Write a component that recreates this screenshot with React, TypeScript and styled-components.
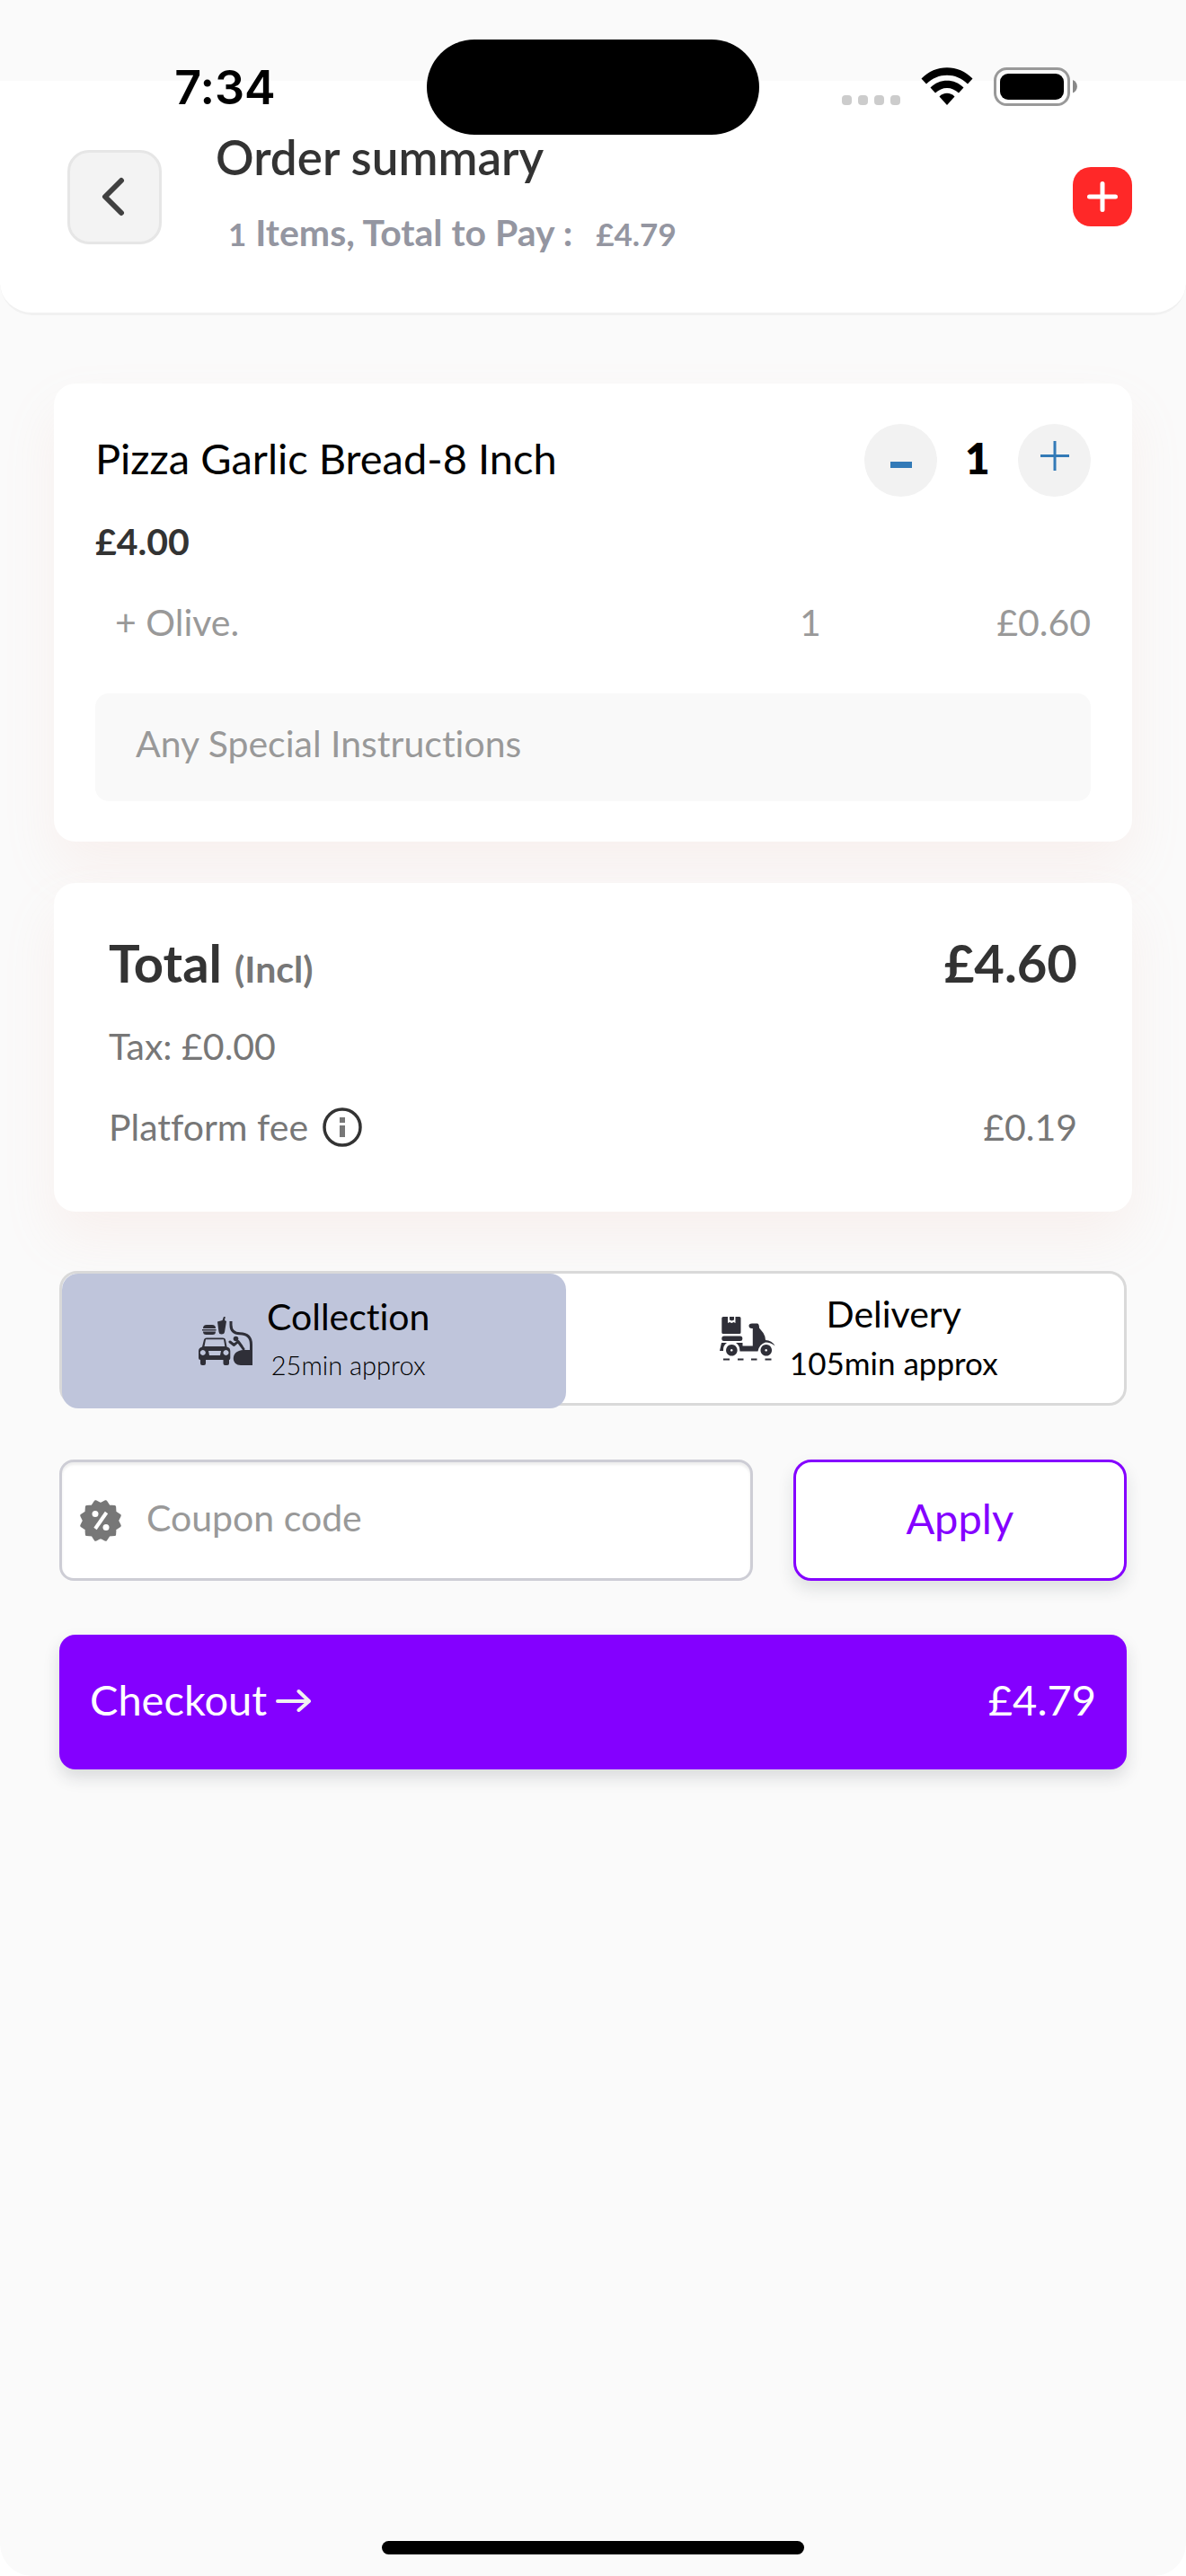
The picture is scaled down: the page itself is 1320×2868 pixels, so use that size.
import React, { useState } from "react";
import styled, { createGlobalStyle } from "styled-components";

const GlobalStyle = createGlobalStyle`
  *, *::before, *::after { box-sizing: border-box; }
  body {
    margin: 0;
    background: #ffffff;
    font-family: Lato, "Open Sans", sans-serif;
    font-variant-ligatures: none;
    color: #000000;
  }
  button, input, textarea {
    margin: 0;
    font-family: inherit;
    font-variant-ligatures: none;
  }
  button { cursor: pointer; }
`;

const Page = styled.div`
  position: relative;
  min-height: 100vh;
  padding-top: 90px;
  background: #fafafa;
  border-radius: 0 0 36px 36px;
`;

/* Device chrome that floats above the page */
const StatusBar = styled.div`
  position: absolute;
  inset: 0 0 auto 0;
  z-index: 2;
  height: 150px;
  padding-top: 44px;
  display: grid;
  grid-template-columns: 1fr 370px 1fr;
`;

const Clock = styled.time`
  padding: 22px 0 0 26px;
  text-align: center;
  font-family: Inter, sans-serif;
  font-size: 52px;
  line-height: 64px;
  font-weight: 600;
`;

const Island = styled.div`
  height: 106px;
  border-radius: 53px;
  background: #000000;
`;

const StatusIcons = styled.div`
  display: flex;
  justify-content: center;
  align-items: flex-start;
  gap: 23px;
  padding: 31px 28px 0 0;
`;

const HomeIndicator = styled.div`
  position: absolute;
  bottom: 24px;
  left: 50%;
  width: 470px;
  height: 15px;
  margin-left: -235px;
  border-radius: 8px;
  background: #000000;
`;

const Header = styled.header`
  display: flex;
  align-items: center;
  gap: 60px;
  padding: 59px 60px;
  background: #ffffff;
  border-bottom: 3px solid #f1f1f1;
  border-radius: 0 0 36px 36px;
`;

const BackButton = styled.button`
  display: grid;
  place-items: center;
  width: 105px;
  height: 105px;
  margin-left: 15px;
  padding: 0;
  border: 3px solid #e6e6e6;
  border-radius: 24px;
  background: #f3f3f3;
`;

const Heading = styled.div`
  flex: 1;
  display: flex;
  flex-direction: column;
  gap: 28px;
`;

const Title = styled.h1`
  margin: 0;
  font-size: 53px;
  line-height: 52px;
  font-weight: 600;
  color: #333333;
`;

const Subtitle = styled.p`
  margin: 0;
  padding-left: 14px;
  font-size: 41px;
  line-height: 60px;
  font-weight: 700;
  color: #9496a1;
`;

const Small = styled.span<{ $gap?: boolean }>`
  font-size: 35px;
  line-height: 40px;
  margin-left: ${(p) => (p.$gap ? "16px" : "0")};
`;

const AddButton = styled.button`
  display: grid;
  place-items: center;
  width: 66px;
  height: 66px;
  padding: 0;
  border: 0;
  border-radius: 20px;
  background: #ff2828;
`;

const Main = styled.main`
  display: flex;
  flex-direction: column;
  padding: 76px 60px 0;
`;

const Card = styled.section`
  border-radius: 24px;
  background: #ffffff;
  box-shadow: 0 30px 60px rgba(240, 160, 150, 0.11);
`;

const ItemCard = styled(Card)`
  padding: 45px 46px;
`;

const TotalCard = styled(Card)`
  margin-top: 46px;
  padding: 53px 61px 64px;
`;

const Row = styled.div<{ $top?: number }>`
  display: flex;
  justify-content: space-between;
  align-items: flex-start;
  margin-top: ${(p) => p.$top ?? 0}px;
`;

const ItemName = styled.h2`
  margin: 0;
  font-size: 47px;
  line-height: 76px;
  font-weight: 400;
`;

const Stepper = styled.div`
  display: grid;
  grid-template-columns: 81px 90px 81px;
  text-align: center;
`;

const StepButton = styled.button`
  display: grid;
  place-items: center;
  width: 81px;
  height: 81px;
  padding: 0;
  border: 0;
  border-radius: 50%;
  background: #f2f2f2;
`;

const Quantity = styled.output`
  font-size: 47px;
  line-height: 76px;
  font-weight: 800;
`;

const ItemPrice = styled.p`
  margin: 20px 0 0;
  font-size: 41px;
  line-height: 60px;
  font-weight: 700;
  color: #333333;
`;

const ExtraRow = styled.div`
  display: grid;
  grid-template-columns: 1fr 124px 200px;
  margin-top: 30px;
  padding-left: 22px;
  font-size: 41px;
  line-height: 60px;
  color: #999999;
`;

const AlignRight = styled.span`
  text-align: right;
`;

const Instructions = styled.textarea`
  display: block;
  width: 100%;
  height: 120px;
  margin-top: 49px;
  padding: 32px 45px;
  border: 0;
  border-radius: 15px;
  resize: none;
  overflow: hidden;
  background: #f9f9f9;
  font-size: 41px;
  line-height: 48px;
  &::placeholder { color: #999999; opacity: 1; }
`;

const Total = styled.strong`
  font-size: 58px;
  line-height: 72px;
  font-weight: 700;
  color: #333333;
`;

const Included = styled.span`
  font-size: 41px;
  line-height: 40px;
  font-weight: 700;
  color: #777777;
`;

const Fee = styled.span`
  display: flex;
  align-items: center;
  gap: 16px;
  font-size: 41px;
  line-height: 60px;
  color: #777777;
`;

const Options = styled.div`
  display: grid;
  grid-template-columns: 19fr 21fr;
  height: 150px;
  margin: 66px 6px 0;
  border: 3px solid #d9d9d9;
  border-radius: 20px;
  background: #ffffff;
`;

const Option = styled.button<{ $active?: boolean }>`
  display: flex;
  justify-content: center;
  align-items: center;
  gap: 16px;
  height: ${(p) => (p.$active ? "150px" : "144px")};
  padding: ${(p) => (p.$active ? "0" : "0 0 0 30px")};
  border: 0;
  border-radius: 18px;
  background: ${(p) => (p.$active ? "#bfc5db" : "transparent")};
  color: #000000;
`;

const OptionText = styled.span`
  display: flex;
  flex-direction: column;
  align-items: center;
  gap: 6px;
  font-size: 41px;
  line-height: 48px;
`;

const OptionTime = styled.span<{ $light?: boolean }>`
  font-size: ${(p) => (p.$light ? 29 : 35)}px;
  font-weight: ${(p) => (p.$light ? 300 : 400)};
`;

const CouponRow = styled.form`
  display: grid;
  grid-template-columns: 27fr 13fr;
  gap: 45px;
  margin: 60px 6px 0;
`;

const CouponField = styled.label`
  display: flex;
  align-items: center;
  gap: 27px;
  height: 135px;
  padding: 0 19px;
  border: 3px solid #cdcdd5;
  border-radius: 16px;
  background: #ffffff;
  box-shadow: inset 0 3px 3px rgba(0, 0, 0, 0.07);
`;

const CouponInput = styled.input`
  flex: 1;
  min-width: 0;
  padding: 0 0 6px;
  border: 0;
  outline: 0;
  background: transparent;
  font-size: 41px;
  line-height: 60px;
  &::placeholder { color: #999999; opacity: 1; }
`;

const ApplyButton = styled.button`
  padding: 0 0 6px;
  border: 3px solid #8400ff;
  border-radius: 20px;
  background: #ffffff;
  box-shadow: 0 9px 18px rgba(33, 43, 54, 0.13);
  font-size: 47px;
  color: #8400ff;
`;

const CheckoutButton = styled.button`
  display: flex;
  justify-content: space-between;
  align-items: center;
  height: 150px;
  margin: 60px 6px 0;
  padding: 0 34px 6px;
  border: 0;
  border-radius: 18px;
  background: #8400ff;
  box-shadow: 0 9px 18px rgba(33, 43, 54, 0.15);
  font-size: 47px;
  color: #ffffff;
`;

const CheckoutLabel = styled.span`
  display: flex;
  align-items: center;
  gap: 10px;
`;

const SignalDots = () => (
  <svg width="65" height="42" viewBox="0 0 65 42" fill="#cccccc" aria-hidden="true">
    {[0, 18, 36, 54].map((x) => (
      <rect key={x} x={x} y="31" width="11" height="11" rx="4" />
    ))}
  </svg>
);

const WifiIcon = () => (
  <svg width="58" height="42" viewBox="0 0 58 42" aria-hidden="true">
    <path d="M0.500 12.500 C16 -4 42 -4 57.500 12.500 L52 18.500 C39 5.500 19 5.500 6 18.500 Z" />
    <path d="M10.500 22.500 C20.500 12 37.500 12 47.500 22.500 L42 28.500 C34.500 21 23.500 21 16 28.500 Z" />
    <path d="M20.500 32.500 C25 27.500 33 27.500 37.500 32.500 L29 42 Z" />
  </svg>
);

const BatteryIcon = () => (
  <svg width="94" height="43" viewBox="0 0 94 43" aria-hidden="true">
    <rect x="1.500" y="1.500" width="82" height="40" rx="13" fill="none" stroke="#999999" strokeWidth="3" />
    <rect x="7" y="7" width="71" height="29" rx="9" />
    <path d="M88 14 C94.500 16.500 94.500 26 88 28.500 Z" fill="#888888" />
  </svg>
);

const BackIcon = () => (
  <svg width="30" height="44" viewBox="0 0 30 44" fill="none" stroke="#404040" strokeWidth="6" strokeLinecap="round" strokeLinejoin="round" aria-hidden="true">
    <path d="M22 4 L4 22 L22 40" />
  </svg>
);

const AddIcon = () => (
  <svg width="34" height="34" viewBox="0 0 34 34" stroke="#ffffff" strokeWidth="5" strokeLinecap="round" aria-hidden="true">
    <path d="M17 2.500 V31.500 M2.500 17 H31.500" />
  </svg>
);

const StepPlus = () => (
  <svg width="32" height="44" viewBox="0 0 32 44" stroke="#337ab7" strokeWidth="3" aria-hidden="true">
    <path d="M16 0 V33 M0 16.500 H32" />
  </svg>
);

const StepMinus = () => (
  <svg width="24" height="18" viewBox="0 0 24 18" aria-hidden="true">
    <rect y="10" width="24" height="7" fill="#337ab7" />
  </svg>
);

const InfoIcon = () => (
  <svg width="44" height="46" viewBox="0 0 44 46" aria-hidden="true">
    <circle cx="22" cy="23" r="20" fill="none" stroke="#333333" strokeWidth="3.500" />
    <rect x="19" y="12" width="6" height="6" fill="#777777" />
    <rect x="19" y="21" width="6" height="13" fill="#777777" />
  </svg>
);

const DriveThroughIcon = () => (
  <svg width="60" height="54" viewBox="0 0 60 54" fill="#2f2f38" aria-hidden="true">
    <path d="M21 5.500 L26.500 4 L28 0 H29.800 L29 4 L31 5 L29 17 Q28.500 19.500 25.500 19.500 Q22.800 19.500 22.500 17 Z" />
    <path d="M5 13 Q5 9 9 9 H15 Q19 9 19 13 Z" />
    <rect x="4" y="14" width="15.500" height="1.500" />
    <path d="M5 16.500 H19 Q19 20 15.500 20 H8.500 Q5 20 5 16.500 Z" />
    <path fillRule="evenodd" d="M6 25.500 Q6.500 23.500 9 23.500 H27 Q29.500 23.500 30 25.500 L31.500 33.500 Q35.300 34.500 35.300 38 V46 Q35.300 48 34 48 V52 Q34 54 32 54 H29.500 Q27.500 54 27.500 52 V48 H8 V52 Q8 54 6 54 H4 Q2 54 2 52 V48 Q0 48 0 46 V38 Q0 34.500 4 33.500 Z M8 25.300 L6.500 33 H29.300 L28 25.300 Z M4.800 37 A3 3 0 1 0 4.810 37 Z M30.500 37 A3 3 0 1 0 30.510 37 Z M11 38 L12 43 H24 L25 38 Z" />
    <circle cx="41.500" cy="24.500" r="2.800" />
    <path d="M35 28 L39.500 31.500 L44 27.500 L48 33 M44 27.500 L50 36" fill="none" stroke="#2f2f38" strokeWidth="3" strokeLinecap="round" strokeLinejoin="round" />
    <path d="M36 5 V9 Q36 18.500 46 18.800 Q58.500 19 58.500 31 V50" fill="none" stroke="#2f2f38" strokeWidth="3" />
    <path d="M60 37 V54 H47 C37 54 36 41 45 38 Q48 36.500 52 37 Z" />
  </svg>
);

const ScooterIcon = () => (
  <svg width="62" height="49" viewBox="0 0 62 49" fill="#2f2f38" aria-hidden="true">
    <path d="M4 0 H9 V7 L11 6 L13.300 7 L15.500 6 L17.500 7 V0 H22 Q23.500 0 23.500 1.500 V17.500 Q23.500 19 22 19 H4 Q2.300 19 2.300 17.500 V1.500 Q2.300 0 4 0 Z M11 0 H16 V3.500 L13.500 4.500 L11 3.500 Z" />
    <rect x="2.300" y="21.500" width="23" height="5.500" rx="2.500" />
    <path d="M2 29 H8 Q3.500 32 4 38 H0 Z M18 29 H25.500 V32.500 H36.800 V13 Q32.500 13.500 32.500 10 Q32.500 7.500 36 7.500 H42 Q44 8 44 12.500 L48.500 18 Q51 22 51 26 Q58 26 61.500 32.500 Q57 28.500 51 28.500 Q44 30.500 42.500 38.500 H22.500 Q22.500 32 18 29 Z" />
    <path fillRule="evenodd" d="M13.300 31 a6.300 6.300 0 1 0 .1 0 Z M13.300 36 a1.300 1.300 0 1 1 -.1 0 Z M51.700 31 a6.300 6.300 0 1 0 .1 0 Z M51.700 36 a1.300 1.300 0 1 1 -.1 0 Z" />
    <path d="M4 47.500 H11 M20 47.500 H26.500 M35 47.500 H41.500 M50.500 47.500 H57.500" stroke="#2f2f38" strokeWidth="2" />
  </svg>
);

const badgePoints = Array.from({ length: 24 }, (_, i) => {
  const angle = ((i * 15 + 15) * Math.PI) / 180;
  const radius = i % 2 === 0 ? 22 : 18.5;
  return `${(24 + radius * Math.cos(angle)).toFixed(1)},${(24 + radius * Math.sin(angle)).toFixed(1)}`;
}).join(" ");

const CouponIcon = () => (
  <svg width="48" height="48" viewBox="0 0 48 48" aria-hidden="true">
    <polygon points={badgePoints} fill="#777777" stroke="#777777" strokeWidth="3" strokeLinejoin="round" />
    <path d="M30.500 15 L18 33" stroke="#ffffff" strokeWidth="4" />
    <circle cx="18" cy="16.500" r="3.500" fill="#ffffff" />
    <circle cx="30" cy="31.500" r="3.500" fill="#ffffff" />
  </svg>
);

const ArrowIcon = () => (
  <svg width="40" height="28" viewBox="0 0 40 28" fill="none" stroke="#f1f1f1" strokeWidth="4" strokeLinecap="round" strokeLinejoin="round" aria-hidden="true">
    <path d="M2 16 H37 M25.500 5 L37 16 L25.500 26" />
  </svg>
);

export default function App() {
  const [note, setNote] = useState("");
  const [coupon, setCoupon] = useState("");

  return (
    <>
      <GlobalStyle />
      <Page>
        <StatusBar>
          <Clock>7:34</Clock>
          <Island />
          <StatusIcons>
            <SignalDots />
            <WifiIcon />
            <BatteryIcon />
          </StatusIcons>
        </StatusBar>

        <Header>
          <BackButton type="button" aria-label="Back">
            <BackIcon />
          </BackButton>
          <Heading>
            <Title>Order summary</Title>
            <Subtitle>
              <Small>1</Small> Items, Total to Pay : <Small $gap>£4.79</Small>
            </Subtitle>
          </Heading>
          <AddButton type="button" aria-label="Add items">
            <AddIcon />
          </AddButton>
        </Header>

        <Main>
          <ItemCard>
            <Row>
              <ItemName>Pizza Garlic Bread-8 Inch</ItemName>
              <Stepper>
                <StepButton type="button" aria-label="Decrease quantity">
                  <StepMinus />
                </StepButton>
                <Quantity>1</Quantity>
                <StepButton type="button" aria-label="Increase quantity">
                  <StepPlus />
                </StepButton>
              </Stepper>
            </Row>
            <ItemPrice>£4.00</ItemPrice>
            <ExtraRow>
              <span>+ Olive.</span>
              <span>1</span>
              <AlignRight>£0.60</AlignRight>
            </ExtraRow>
            <Instructions
              aria-label="Any Special Instructions"
              placeholder="Any Special Instructions"
              rows={1}
              value={note}
              onChange={(e) => setNote(e.target.value)}
            />
          </ItemCard>

          <TotalCard>
            <Row>
              <Total>
                Total <Included>(Incl)</Included>
              </Total>
              <Total>£4.60</Total>
            </Row>
            <Row $top={27}>
              <Fee>Tax: £0.00</Fee>
            </Row>
            <Row $top={30}>
              <Fee>
                Platform fee <InfoIcon />
              </Fee>
              <Fee>£0.19</Fee>
            </Row>
          </TotalCard>

          <Options>
            <Option type="button" $active aria-pressed="true">
              <DriveThroughIcon />
              <OptionText>
                Collection
                <OptionTime $light>25min approx</OptionTime>
              </OptionText>
            </Option>
            <Option type="button" aria-pressed="false">
              <ScooterIcon />
              <OptionText>
                Delivery
                <OptionTime>105min approx</OptionTime>
              </OptionText>
            </Option>
          </Options>

          <CouponRow onSubmit={(e) => e.preventDefault()}>
            <CouponField>
              <CouponIcon />
              <CouponInput
                aria-label="Coupon code"
                placeholder="Coupon code"
                value={coupon}
                onChange={(e) => setCoupon(e.target.value)}
              />
            </CouponField>
            <ApplyButton type="submit">Apply</ApplyButton>
          </CouponRow>

          <CheckoutButton type="button">
            <CheckoutLabel>
              Checkout <ArrowIcon />
            </CheckoutLabel>
            <span>£4.79</span>
          </CheckoutButton>
        </Main>

        <HomeIndicator />
      </Page>
    </>
  );
}
